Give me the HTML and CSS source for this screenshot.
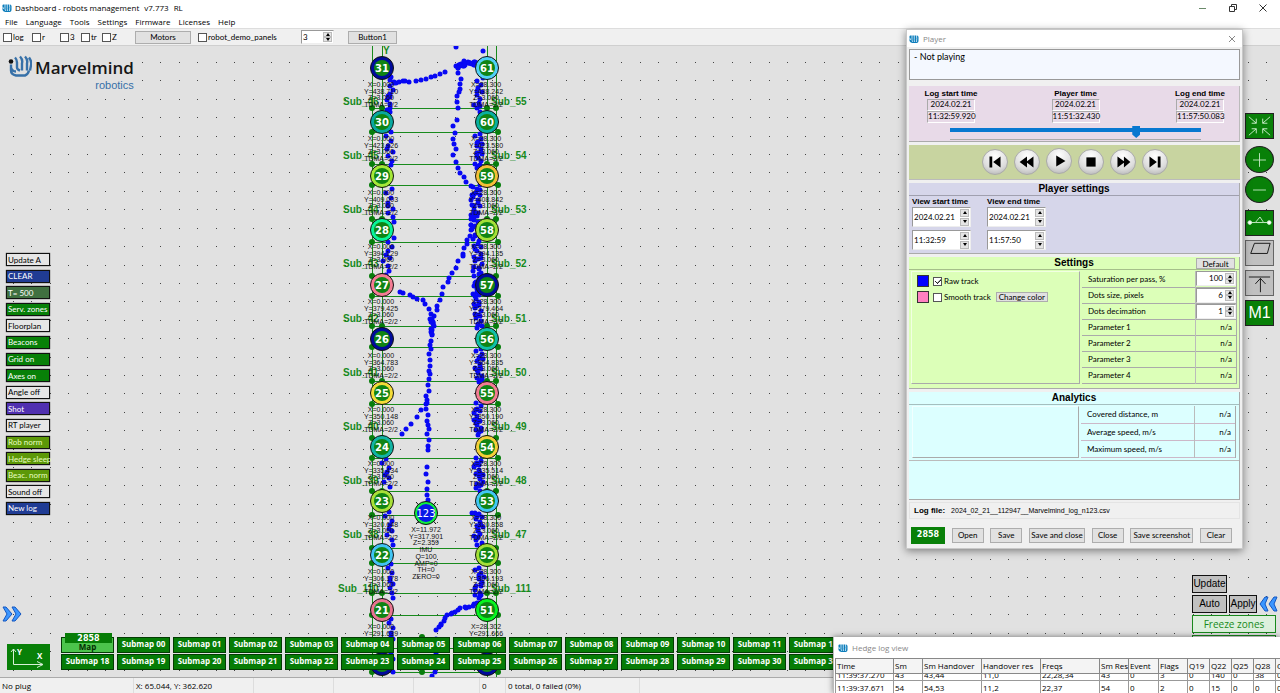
FILE: index.html
```html
<!DOCTYPE html>
<html lang="en">
<head>
<meta charset="utf-8">
<title>Dashboard - robots management</title>
<link rel="stylesheet" href="styles.css">
</head>
<body>
<svg class="defs" width="0" height="0" aria-hidden="true">
  <symbol id="brand" viewBox="0 0 20 20">
    <path d="M1 5q0-2 2-2h13q3 0 3 4v7q0 4-4 4H7q-4 0-6-4z" fill="#0b7cba"/>
    <path d="M6 2v9q0 3 2 5M10.500 2v9q0 3 1 5M15 2q1 7 0 14M1 8q2 1 2 4" fill="none" stroke="#e8f6ff" stroke-width="1.600"/>
  </symbol>
</svg>

<header class="titlebar">
  <svg class="app-icon"><use href="#brand"/></svg>
  <span class="title">Dashboard - robots management</span><span class="title">v7.773</span><span class="title">RL</span>
  <div class="window-buttons">
    <button aria-label="Minimise"><svg viewBox="0 0 10 10"><path d="M1 5.500h7" stroke="#6a8a6a"/></svg></button>
    <button aria-label="Restore"><svg viewBox="0 0 10 10"><path d="M1.500 3.500h5v5h-5zM3.500 3.500v-2h5v5h-2" fill="none" stroke="#333"/></svg></button>
    <button aria-label="Close"><svg viewBox="0 0 10 10"><path d="M1.500 1.500l7 7m0-7l-7 7" stroke="#333"/></svg></button>
  </div>
</header>
<nav class="menubar">
  <button>File</button><button>Language</button><button>Tools</button><button>Settings</button><button>Firmware</button><button>Licenses</button><button>Help</button>
</nav>
<div class="toolbar">
  <label class="check w29"><input type="checkbox">log</label>
  <label class="check w28"><input type="checkbox">r</label>
  <label class="check w21"><input type="checkbox">3</label>
  <label class="check w21"><input type="checkbox">tr</label>
  <label class="check w33"><input type="checkbox">Z</label>
  <button class="btn motors">Motors</button>
  <label class="check demo"><input type="checkbox">robot_demo_panels</label>
  <span class="spin tool-spin"><input type="text" value="3" aria-label="Robot panels"><span class="steps"><button aria-label="Up"></button><button aria-label="Down"></button></span></span>
  <button class="btn button1">Button1</button>
</div>

<main class="canvas">
  <svg class="map" id="map" role="img" aria-label="Beacon map"></svg>

  <div class="logo">
    <svg viewBox="0 0 24 22">
      <path d="M3 9v6q0 4 5 5h9q3-1 4-5M7 2q2 2 2 5v5q0 2 3 3M12 1q3 3 2 7v7M17 1q3 3 2 7v7M21 2q3 4 2 8l-1 5M3 12q1 4 5 4" fill="none" stroke="#3670a8" stroke-width="2.400"/>
      <circle cx="3" cy="6" r="2.300" fill="#111"/>
    </svg>
    <div class="logo-text"><b>Marvelmind</b><span>robotics</span></div>
  </div>

  <div class="side">
    <button>Update A</button><button class="navy">CLEAR</button><button class="dim">T= 500</button><button class="green">Serv. zones</button><button>Floorplan</button><button class="green">Beacons</button><button class="green">Grid on</button><button class="green">Axes on</button><button>Angle off</button><button class="violet">Shot</button><button>RT player</button><button class="lime">Rob norm</button><button class="lime">Hedge sleep</button><button class="lime">Beac. norm</button><button>Sound off</button><button class="navy">New log</button>
  </div>

  <button class="chevrons left" aria-label="Show left panel"><svg viewBox="0 0 20 16"><path d="M1 1h3l6 7-6 7H1l4-7zM10 1h3l6 7-6 7h-3l4-7z" fill="#3b96ff" stroke="#1456c0"/></svg></button>

  <div class="bottom">
    <svg class="axes" viewBox="0 0 43 26"><path d="M6.500 5v15.500h29M4 8l2.500-3L9 8M30 17.500l6 3-6 3" fill="none" stroke="#d8f0d8"/><text x="10" y="11">Y</text><text x="30" y="15">X</text></svg>
    <div class="submaps">
      <div class="map-cell"><button class="current">Map</button><span>2858</span></div>
      <button>Submap 00</button><button>Submap 01</button><button>Submap 02</button><button>Submap 03</button><button>Submap 04</button><button>Submap 05</button><button>Submap 06</button><button>Submap 07</button><button>Submap 08</button><button>Submap 09</button><button>Submap 10</button><button>Submap 11</button><button>Submap 12</button>
      <button>Submap 18</button><button>Submap 19</button><button>Submap 20</button><button>Submap 21</button><button>Submap 22</button><button>Submap 23</button><button>Submap 24</button><button>Submap 25</button><button>Submap 26</button><button>Submap 27</button><button>Submap 28</button><button>Submap 29</button><button>Submap 30</button><button>Submap 31</button>
    </div>
  </div>

  <div class="tools">
    <button class="first" aria-label="Fit to view"><svg viewBox="0 0 29 26"><path d="M3 3l8 7m0-5v5H6M26 3l-8 7m0-5v5h5M3 23l8-7m0 5v-5H6M26 23l-8-7m0 5v-5h5" /></svg></button>
    <button class="round" aria-label="Zoom in"><svg viewBox="0 0 29 28"><path d="M7 14h15M14.500 6v16"/></svg></button>
    <button class="round" aria-label="Zoom out"><svg viewBox="0 0 29 28"><path d="M7 14h15"/></svg></button>
    <button class="after-round" aria-label="Link"><svg viewBox="0 0 29 26"><path d="M4 12.500h6l5-6 4 6h6M10 12.500h9"/><circle cx="4" cy="12.500" r="2" fill="#fff"/><circle cx="25" cy="12.500" r="2" fill="#fff"/></svg></button>
    <button class="gray" aria-label="Plane"><svg viewBox="0 0 29 26"><path d="M9 2.500h17l-3 11H5z"/></svg></button>
    <button class="gray" aria-label="To top"><svg viewBox="0 0 29 26"><path d="M3 6.500h23M15.500 8v15M10 14l5.500-6 5.500 6"/></svg></button>
    <button class="m1">M1</button>
  </div>

  <div class="zones">
    <button>Update</button>
    <div class="row"><button>Auto</button><button class="apply">Apply</button><button class="chevrons" aria-label="Show right panel"><svg viewBox="0 0 20 16"><path d="M9 1H6L1 8l5 7h3L6 8zM18 1h-3l-5 7 5 7h3l-3-7z" fill="#3b96ff" stroke="#1456c0"/></svg></button></div>
    <button class="freeze">Freeze zones</button>
    <div class="freeze-next"></div>
  </div>
</main>

<footer class="status">
  <span class="s1">No plug</span><span class="s2">X: 65.044, Y: 362.620</span><span class="s3"></span><span class="s3"></span><span class="s4"></span><span class="s5">0</span><span class="s6">0 total, 0 failed (0%)</span>
</footer>

<section class="player">
  <div class="win-title"><svg class="app-icon"><use href="#brand"/></svg><span>Player</span><button aria-label="Close player"><svg viewBox="0 0 8 8"><path d="M1 1l6 6m0-6l-6 6" stroke="#888"/></svg></button></div>
  <textarea class="message" readonly aria-label="Player state">- Not playing</textarea>

  <div class="timeline">
    <div class="times">
      <div class="time"><b>Log start time</b><span>2024.02.21</span><span>11:32:59.920</span></div>
      <div class="time"><b>Player time</b><span>2024.02.21</span><span>11:51:32.430</span></div>
      <div class="time"><b>Log end time</b><span>2024.02.21</span><span>11:57:50.083</span></div>
    </div>
    <input type="range" min="0" max="100" value="75" aria-label="Position">
  </div>

  <div class="transport">
    <button aria-label="To start"><svg viewBox="0 0 26 26"><path d="M7 7h3v12H7zM19 7v12l-8-6z"/></svg></button>
    <button aria-label="Rewind"><svg viewBox="0 0 26 26"><path d="M13 7v12l-8-6zM20 7v12l-8-6z"/></svg></button>
    <button class="play" aria-label="Play"><svg viewBox="0 0 26 26"><path d="M10 7v12l10-6z"/></svg></button>
    <button aria-label="Stop"><svg viewBox="0 0 26 26"><path d="M8 8h10v10H8z"/></svg></button>
    <button aria-label="Forward"><svg viewBox="0 0 26 26"><path d="M7 7v12l8-6zM14 7v12l7-6z"/></svg></button>
    <button aria-label="To end"><svg viewBox="0 0 26 26"><path d="M7 7v12l8-6zM16 7h3v12h-3z"/></svg></button>
  </div>

  <div class="view">
    <h2>Player settings</h2>
    <div class="view-cols">
      <fieldset><legend>View start time</legend>
        <span class="spin"><input type="text" value="2024.02.21" aria-label="Start date"><span class="steps"><button aria-label="Up"></button><button aria-label="Down"></button></span></span>
        <span class="spin"><input type="text" value="11:32:59" aria-label="Start time"><span class="steps"><button aria-label="Up"></button><button aria-label="Down"></button></span></span>
      </fieldset>
      <fieldset><legend>View end time</legend>
        <span class="spin"><input type="text" value="2024.02.21" aria-label="End date"><span class="steps"><button aria-label="Up"></button><button aria-label="Down"></button></span></span>
        <span class="spin"><input type="text" value="11:57:50" aria-label="End time"><span class="steps"><button aria-label="Up"></button><button aria-label="Down"></button></span></span>
      </fieldset>
    </div>
  </div>

  <div class="settings">
    <h2>Settings<button class="btn default">Default</button></h2>
    <div class="split">
      <div class="tracks">
        <div class="track"><i class="raw"></i><label class="check"><input type="checkbox" checked>Raw track</label></div>
        <div class="track"><i class="smooth"></i><label class="check"><input type="checkbox">Smooth track</label><button class="btn">Change color</button></div>
      </div>
      <table class="params">
        <tr><th>Saturation per pass, %</th><td class="num"><span class="spin"><input type="text" value="100" aria-label="Saturation per pass"><span class="steps"><button aria-label="Up"></button><button aria-label="Down"></button></span></span></td></tr>
        <tr><th>Dots size, pixels</th><td class="num"><span class="spin"><input type="text" value="6" aria-label="Dots size"><span class="steps"><button aria-label="Up"></button><button aria-label="Down"></button></span></span></td></tr>
        <tr><th>Dots decimation</th><td class="num"><span class="spin"><input type="text" value="1" aria-label="Dots decimation"><span class="steps"><button aria-label="Up"></button><button aria-label="Down"></button></span></span></td></tr>
        <tr><th>Parameter 1</th><td>n/a</td></tr>
        <tr><th>Parameter 2</th><td>n/a</td></tr>
        <tr><th>Parameter 3</th><td>n/a</td></tr>
        <tr><th>Parameter 4</th><td>n/a</td></tr>
      </table>
    </div>
  </div>

  <div class="analytics">
    <h2>Analytics</h2>
    <div class="split">
      <div class="tracks"></div>
      <table class="params">
        <tr><th>Covered distance, m</th><td>n/a</td></tr>
        <tr><th>Average speed, m/s</th><td>n/a</td></tr>
        <tr><th>Maximum speed, m/s</th><td>n/a</td></tr>
      </table>
    </div>
  </div>

  <div class="logfile"><b>Log file:</b><span>2024_02_21__112947__Marvelmind_log_n123.csv</span></div>
  <div class="actions">
    <button class="btn count">2858</button><button class="btn b32">Open</button><button class="btn b32">Save</button><button class="btn b56">Save and close</button><button class="btn b32">Close</button><button class="btn b63">Save screenshot</button><button class="btn b32">Clear</button>
  </div>
</section>

<section class="hedge">
  <div class="win-title"><svg class="app-icon"><use href="#brand"/></svg><span>Hedge log view</span></div>
  <table>
    <colgroup><col class="c58"><col class="c29"><col class="c59"><col class="c59"><col class="c59"><col class="c29"><col class="c30"><col class="c29"><col class="c22"><col class="c22"><col class="c22"><col class="c22"><col class="c22"></colgroup>
    <thead><tr><th>Time</th><th>Sm</th><th>Sm Handover</th><th>Handover res</th><th>Freqs</th><th>Sm Res</th><th>Event</th><th>Flags</th><th>Q19</th><th>Q22</th><th>Q25</th><th>Q28</th><th>Q31</th></tr></thead>
    <tbody>
      <tr class="cut"><td><span>11:39:37.270</span></td><td><span>43</span></td><td><span>43,44</span></td><td><span>11,0</span></td><td><span>22,28,34</span></td><td><span>43</span></td><td><span>0</span></td><td><span>3</span></td><td><span>0</span></td><td><span>140</span></td><td><span>0</span></td><td><span>38</span></td><td><span>0</span></td></tr>
      <tr><td>11:39:37.671</td><td>54</td><td>54,53</td><td>11,2</td><td>22,37</td><td>54</td><td>0</td><td>2</td><td>0</td><td>15</td><td>0</td><td>0</td><td>0</td></tr>
    </tbody>
  </table>
</section>
<script src="map.js"></script>
</body>
</html>
```

FILE: styles.css
```css
* { box-sizing: border-box; }
body {
  --ui: "Open Sans", "Noto Sans", sans-serif;
  --small: Lato, "Liberation Sans", sans-serif;
  margin: 0;
  height: 100vh;
  display: flex;
  flex-direction: column;
  overflow: hidden;
  font: 8px/12px var(--ui);
  color: #000;
  background: #f0f0f0;
  position: relative;
}
button, input, textarea { font: inherit; color: inherit; margin: 0; padding: 0; border-radius: 0; }
button { border: 0; background: none; white-space: nowrap; }
svg { display: block; }
.defs { position: absolute; }
.app-icon { width: 10px; height: 10px; flex: none; }

.titlebar { display: flex; align-items: center; height: 16px; background: #fff; padding-left: 2px; flex: none; }
.titlebar .title { margin-left: 3px; }
.titlebar .title + .title { margin-left: 5px; }
.window-buttons { margin-left: auto; display: flex; gap: 20px; padding-right: 12px; }
.window-buttons svg { width: 10px; height: 10px; }
.menubar { display: flex; gap: 8px; height: 12px; background: #fff; padding-left: 5px; flex: none; }

.btn { background: #e1e1e1; border: 1px solid #adadad; text-align: center; font: 8px/11px var(--small); }
.check { display: flex; align-items: center; gap: 1px; font: 8px/12px var(--small); white-space: nowrap; }
.check input { appearance: none; width: 9px; height: 9px; background: #fff; border: 1px solid #555; flex: none; }
.check input:checked { background: linear-gradient(135deg, transparent 44%, #222 45%, #222 56%, transparent 57%) 3px 1px / 4px 5px no-repeat, linear-gradient(45deg, transparent 40%, #222 41%, #222 59%, transparent 60%) 1px 3px / 3px 3px no-repeat, #fff; }

.toolbar { display: flex; align-items: center; height: 18px; padding: 0 3px; border-top: 1px solid #ddd; border-bottom: 1px solid #cfcfcf; flex: none; }
.w29 { width: 29px; }
.w28 { width: 28px; }
.w21 { width: 21px; }
.w33 { width: 33px; }
.motors { width: 56px; margin-right: 7px; }
.demo { width: 103px; }
.button1 { width: 49px; margin-left: 14px; }
.toolbar .btn { height: 13px; }

.spin { display: flex; background: #fff; border: 1px solid #999; border-right-color: #eee; border-bottom-color: #eee; padding: 1px; }
.spin input { flex: 1; min-width: 0; width: 0; border: 0; background: #fff; font: 8px/11px var(--small); }
.steps { display: flex; flex-direction: column; width: 9px; flex: none; }
.steps button { flex: 1; background: #e4e4e4; border: 1px solid #bbb; display: flex; align-items: center; justify-content: center; min-height: 0; }
.steps button::before { content: ""; border: 2px solid transparent; border-top: 0; border-bottom: 3px solid #000; }
.steps button:last-child::before { border-top: 3px solid #000; border-bottom: 0; }
.tool-spin { width: 33px; height: 14px; }

.canvas { position: relative; flex: 1; min-height: 0; background: #e1e1e1; overflow: hidden; }
.map { position: absolute; inset: 0; width: 100%; height: 100%; }
.map text { text-anchor: middle; font: 7px "Liberation Sans", sans-serif; fill: #111; }
.map .sub { text-anchor: start; font: bold 10px "Liberation Sans", sans-serif; fill: #168a1c; }
.map .num { font: bold 10px "DejaVu Sans", sans-serif; fill: #fff; }
.map .hedge-num { font: 10px "DejaVu Sans", sans-serif; fill: #fff; }
.map .grid { fill: #444; }
.map .lines { stroke: #188a1c; fill: none; }
.map .knots { fill: #087d0c; }
.map .track { fill: #0808f4; }

.logo { position: absolute; left: 8px; top: 9px; display: flex; gap: 3px; background: #e1e1e1; }
.logo svg { width: 24px; height: 23px; }
.logo-text { display: flex; flex-direction: column; align-items: flex-end; font: 11px/12px "Liberation Sans", sans-serif; color: #3670a8; padding-top: 2px; }
.logo-text b { font: 600 17px/22px "Open Sans", sans-serif; color: #161616; }

.side { position: absolute; left: 6px; top: 207px; width: 44px; height: 262px; display: flex; flex-direction: column; justify-content: space-between; }
.side button { height: 13px; border: 1px solid #111; text-align: left; padding-left: 1px; font: 8px/10px var(--small); background: #e6e6e6; box-shadow: 0 0 1px #222; }
.side .navy { background: #203c94; color: #fff; }
.side .dim { background: #407040; color: #fff; }
.side .green { background: #088008; color: #fff; }
.side .violet { background: #5030b0; color: #fff; }
.side .lime { background: #5c9808; color: #e8ffc0; }

.chevrons svg { width: 20px; height: 16px; }
.chevrons.left { position: absolute; left: 2px; bottom: 55px; }

.bottom { position: absolute; left: 7px; bottom: 7px; display: flex; align-items: flex-end; gap: 11px; }
.axes { width: 43px; height: 26px; background: #088008; }
.axes text { font: bold 8px var(--ui); fill: #fff; }
.submaps { display: grid; grid-template-columns: repeat(14, 53px); gap: 1px 3px; }
.submaps button { display: block; height: 16px; width: 100%; background: #067c06; border: 1px solid #033c03; color: #fff; font: bold 8px/12px "Open Sans", sans-serif; padding-bottom: 2px; }
.map-cell { position: relative; }
.submaps .current { background: #4cc44c; color: #032c03; line-height: 10px; padding: 3px 0 0; }
.map-cell span { position: absolute; left: 4px; right: 2px; top: -4px; height: 10px; background: #067c06; color: #fff; text-align: center; font: bold 8px/11px "DejaVu Sans", sans-serif; }

.tools { position: absolute; right: 6px; top: 67px; width: 29px; display: flex; flex-direction: column; gap: 4px; }
.tools button { height: 26px; background: #088008; border: 1px solid #222; }
.tools svg { width: 27px; height: 24px; fill: none; stroke: #d0f0d0; }
.tools .first { margin-bottom: 3px; }
.tools .round { border-radius: 50%; height: 27px; margin-bottom: -1px; }
.tools .after-round { margin-top: 4px; }
.tools .gray { background: #c0c0c0; border-color: #666; }
.tools .gray svg { stroke: #111; }
.tools .m1 { color: #fff; font: 16px "Liberation Sans", sans-serif; }

.zones { position: absolute; right: 1px; top: 529px; width: 87px; display: flex; flex-direction: column; gap: 2px; align-items: flex-start; font: 10px/14px "Liberation Sans", sans-serif; }
.zones button { width: 35px; height: 18px; background: #c0c0c0; border: 1px solid #111; }
.zones .row { display: flex; gap: 2px; align-items: center; }
.zones .apply { width: 28px; }
.zones .chevrons { width: 20px; height: 16px; border: 0; background: none; }
.zones .freeze { width: 84px; background: #ddf0dd; border-color: #188a1c; color: #188a1c; font: 10px/14px "Open Sans", sans-serif; }
.freeze-next { width: 84px; height: 8px; border: 1px solid #188a1c; }

.status { display: flex; height: 16px; border-top: 1px solid #aaa; flex: none; line-height: 16px; }
.status span { border-right: 1px solid #ddd; padding-left: 2px; }
.status .s1 { width: 134px; }
.status .s2 { width: 120px; }
.status .s3 { width: 80px; }
.status .s4 { width: 66px; }
.status .s5 { width: 26px; }
.status .s6 { width: 134px; }

.player { position: absolute; right: 37px; top: 29px; width: 337px; background: #f0f0f0; border: 1px solid #c8c8c8; box-shadow: 0 2px 8px rgba(0, 0, 0, .45); padding: 0 2px 4px; display: flex; flex-direction: column; font: 8px/12px var(--small); }
.win-title { display: flex; align-items: center; gap: 4px; background: #fff; color: #888; font: 8px/12px var(--ui); height: 17px; }
.player .win-title { margin: 0 -2px 2px; padding: 0 6px 0 2px; }
.win-title button { margin-left: auto; }
.win-title button svg { width: 8px; height: 8px; }
.message { height: 31px; resize: none; display: block; border: 1px solid #999; background: #f4f8ff; padding: 1px 4px; overflow: hidden; font: 9px/12px var(--small); outline: 0; margin-bottom: 6px; }
.timeline { background: #e8dae8; border-bottom: 1px solid #aaa; border-right: 1px solid #bbb; height: 56px; padding: 2px 12px 0 15px; margin-bottom: 3px; }
.times { display: flex; justify-content: space-between; }
.time { display: flex; flex-direction: column; align-items: center; width: 54px; white-space: nowrap; }
.time b, legend { font: bold 8px/11px "Liberation Sans", sans-serif; }
.time span { width: 48px; border: 1px solid #aaa; border-right-color: #fff; border-bottom-color: #fff; text-align: center; height: 12px; line-height: 9px; }
input[type="range"] { appearance: none; display: block; width: 251px; height: 15px; margin: 2px 0 0 26px; background: linear-gradient(#0878d0, #0878d0) 0 3px / 100% 4px no-repeat; border-bottom: 1px solid #aaa; }
input[type="range"]::-webkit-slider-thumb { appearance: none; width: 8px; height: 12px; background: #0878d0; clip-path: polygon(0 0, 100% 0, 100% 70%, 50% 100%, 0 70%); }
.transport { background: #c8d4a0; height: 35px; display: flex; align-items: center; justify-content: center; gap: 6px; border-bottom: 1px solid #bbb; margin-bottom: 3px; }
.transport button { width: 26px; height: 26px; border-radius: 50%; border: 1px solid #aaa; background: radial-gradient(circle at 50% 25%, #fff, #ddd 60%, #aaa); }
.transport svg { width: 24px; height: 24px; }
.transport .play { margin-bottom: 3px; }
h2 { position: relative; margin: 0; text-align: center; font: bold 10px/12px "Liberation Sans", sans-serif; height: 13px; border-bottom: 1px solid rgba(0, 0, 0, .25); }
.view, .settings, .analytics { border-right: 1px solid #aaa; border-bottom: 1px solid #aaa; margin-bottom: 3px; }
.view { background: #d6d6ea; height: 71px; }
.view-cols { display: flex; gap: 16px; padding: 0 3px; }
fieldset { border: 0; padding: 0; margin: 0; min-width: 0; width: 59px; }
legend { padding: 0; white-space: nowrap; }
fieldset .spin { height: 20px; margin-bottom: 3px; align-items: center; }
fieldset .steps { height: 17px; gap: 1px; }
.settings { background: #dcffb8; height: 132px; }
.default { position: absolute; right: 4px; top: 1px; width: 39px; line-height: 8px; height: 11px; }
.split { display: flex; gap: 2px; padding: 1px 2px 0; }
.tracks { flex: 1; border: 1px solid rgba(255, 255, 255, .6); border-right-color: #aaa; border-bottom-color: #aaa; padding: 1px 5px; }
.track { display: flex; align-items: center; height: 16px; }
.track i { width: 12px; height: 12px; border: 1px solid #333; margin-right: 4px; }
.track .check { gap: 2px; }
.track .btn { margin-left: 5px; width: 52px; line-height: 8px; }
.raw { background: #00f; }
.smooth { background: #ff80c0; }
.params { width: 155px; border-collapse: collapse; table-layout: fixed; }
.params th { font-weight: normal; text-align: left; padding: 0 0 0 6px; }
.params td { width: 41px; text-align: right; padding: 0 4px 0 0; border-left: 1px solid #bbb; border-right: 1px solid #aaa; }
.params tr { height: 16px; border-bottom: 1px solid #aaa; }
.params .num { padding: 0; }
.num .spin { height: 15px; }
.num input { text-align: right; padding-right: 2px; }
.analytics { background: #dcffff; height: 108px; margin-bottom: 2px; }
.analytics .split { border-bottom: 1px solid #bbb; padding: 1px 3px 2px; }
.analytics .params tr { height: 17px; border-color: #ccb8c8; }
.logfile { display: flex; gap: 6px; height: 17px; align-items: center; padding-left: 4px; border: 1px solid #e4e4e4; margin-bottom: 7px; }
.logfile b { font: bold 8px/11px "Liberation Sans", sans-serif; }
.logfile span { font: 7px/11px "Liberation Sans", sans-serif; }
.actions { display: flex; align-items: center; padding: 0 8px 0 2px; justify-content: space-between; height: 18px; }
.actions .btn { height: 15px; }
.b32 { width: 32px; }
.b56 { width: 56px; }
.b63 { width: 63px; }
.actions .count { width: 34px; height: 17px; background: #088008; border-color: #088008; color: #fff; font: bold 8px/12px "DejaVu Sans", sans-serif; }

.hedge { position: absolute; left: 833px; right: 0; bottom: 0; height: 56px; background: #fff; border-left: 1px solid #bbb; box-shadow: 0 0 6px rgba(0, 0, 0, .5); overflow: hidden; padding-left: 1px; }
.hedge .win-title { height: 21px; padding-left: 3px; }
.hedge table { border-collapse: collapse; table-layout: fixed; width: 462px; }
.hedge th { background: #f4f4f4; border: 1px solid #888; height: 15px; }
.hedge th, .hedge td { text-align: left; font-weight: normal; padding: 0 0 0 1px; white-space: nowrap; line-height: 12px; overflow: hidden; }
.hedge td { border: 1px solid #999; height: 14px; }
.hedge .cut td { height: 7px; }
.cut span { display: flex; align-items: flex-end; height: 6px; overflow: hidden; line-height: 10px; }
.c58 { width: 58px; }
.c59 { width: 59px; }
.c29 { width: 29px; }
.c30 { width: 30px; }
.c22 { width: 22px; }
```

FILE: map.js
```js
const NS = "http://www.w3.org/2000/svg";
const map = document.getElementById("map");

function add(parent, tag, attrs, text) {
  const el = document.createElementNS(NS, tag);
  for (const key in attrs) el.setAttribute(key, attrs[key]);
  if (text !== undefined) el.textContent = text;
  parent.appendChild(el);
  return el;
}

// The map is stored in window coordinates; the canvas starts below the toolbar.
const root = add(map, "g", { transform: "translate(0 -46)" });

const grid = add(root, "g", { class: "grid" });
for (let row = 0; row < 34; row++) {
  for (let col = 0; col < 69; col++) {
    add(grid, "rect", { x: Math.round(13 + col * 18.43), y: Math.round(62 + row * 18.41), width: 1, height: 1 });
  }
}

const left = [
  [31, "#000a9c", "438.710"], [30, "#08a8a0", "423.926"], [29, "#a4e838", "409.003"], [28, "#08f498", "394.129"],
  [27, "#f47c94", "379.425"], [26, "#000a9c", "364.783"], [25, "#f4dc38", "350.148"], [24, "#10b4a4", "335.434"],
  [23, "#a8e038", "320.648"], [22, "#40c4f4", "306.178"], [21, "#e87490", "291.639"], [20, "#000a9c"]
];
const right = [
  [61, "#50d0f8", "438.242"], [60, "#08b0a0", "423.580"], [59, "#f4c038", "408.842"], [58, "#a4e038", "394.135"],
  [57, "#000a9c", "379.464"], [56, "#10c0a8", "364.835"], [55, "#f47c94", "350.190"], [54, "#f4d038", "335.514"],
  [53, "#40c8f4", "320.858"], [52, "#a4e038", "306.193"], [51, "#08f420", "291.666"], [50, "#000a9c"]
];
const subs = [["46", "55"], ["45", "54"], ["44", "53"], ["43", "52"], ["42", "51"], ["41", "50"], ["40", "49"], ["39", "48"], ["38", "47"], ["110", "111"]];

const lines = add(root, "g", { class: "lines" });
const knots = add(root, "g", { class: "knots" });
[372, 382, 487, 496].forEach(x => add(lines, "path", { d: `M${x}.5 46V677` }));
const levels = [108, 132, 164, 185, 219, 242, 276, 296, 326, 347, 381, 404, 438, 458, 491, 515, 548, 563, 593, 615, 648, 672];
levels.forEach((y, i) => {
  add(lines, "path", { d: `M372 ${y}.5H498` });
  (i % 2 ? [372, 498] : [372, 382, 487, 496]).forEach(x => add(knots, "circle", { cx: x, cy: y, r: 3 }));
});
add(knots, "circle", { cx: 422, cy: 637, r: 3 });
add(knots, "circle", { cx: 422, cy: 672, r: 3 });

subs.forEach(([a, b], i) => {
  const y = 105 + Math.round(i * 54.15);
  add(root, "text", { class: "sub", x: i === 9 ? 338 : 343, y }, "Sub_" + a);
  add(root, "text", { class: "sub", x: 491, y }, "Sub_" + b);
});
add(root, "text", { class: "sub", x: 383, y: 54 }, "Y");

// Recorded positions of the mobile beacon: [spacing, jitter, path]
const tracks = [
  [3, 1, "390 78L392 82L396 82L409 82"],
  [5, 0, "416 81L421 80L426 79L437 75L446 72"],
  [5, 0, "456 47L457 47"], [5, 0, "483 51L484 51"],
  [2, 1, "457 69L458 65L464 62L472 62L478 64"],
  [2, 1, "458 66L468 64L480 64"],
  [5, 1, "457 69L459 73L460 80L461 89L458 93L457 103L458 110"],
  [6, 1, "456 121L454 126L455 131L453 139L455 147L454 158L457 165L462 175L467 185L472 187L478 189"],
  [5, 1, "471 196L474 210L472 225L470 235L466 243L462 257"],
  [6, 1, "462 257L455 268L448 281L442 293L438 305L435 316L432 325"],
  [5, 1, "399 293L413 296L424 302L430 312L432 325"],
  [5, 1, "432 325L431 340L430 360L429 380L427 395L426 404L428 425L428 452"],
  [3, 1, "431 320L433 326L431 336"],
  [7, 1, "426 468L428 473L426 479L428 484L426 491L428 496L427 503"],
  [8, 1, "426 404L420 413L412 421L404 432L396 438"],
  [3, 2, "393 84L391 92L388 98L390 105L388 115"],
  [4, 3, "389 133L388 143L391 160L389 168"],
  [4, 3, "390 190L388 200L391 213L393 222"],
  [4, 3, "392 239L388 252L386 262L389 275"],
  [4, 3, "384 460L388 470L386 480L390 490"],
  [4, 3, "387 513L391 525L389 535L392 545"],
  [4, 2, "390 565L391 580L392 598"],
  [4, 2, "390 620L392 635L390 650L392 674"],
  [3, 3, "481 79L478 85L480 97L476 105L481 113"],
  [2, 3, "478 135L480 150L478 160L479 170"],
  [2, 4, "477 186L476 205L474 220L477 240L478 260L477 275"],
  [2, 3, "477 275L476 295L478 315L480 330"],
  [2, 3, "479 350L481 358L478 368L481 384"],
  [2, 3, "479 402L476 416L480 437"],
  [2, 3, "480 457L476 466L481 478L477 492"],
  [2, 3, "473 514L478 513L480 528L476 536L480 546"],
  [2, 3, "477 569L482 580L476 590L481 598L478 604"],
  [3, 1, "478 604L470 606L455 611L446 617L441 624L436 632"],
  [4, 2, "435 640L437 655L434 665L434 676"]
];
tracks.forEach(([step, jitter, points]) => {
  const path = add(root, "path", { d: "M" + points, fill: "none" });
  const group = add(root, "g", { class: "track" });
  for (let at = 0, n = 1; at <= path.getTotalLength(); at += step, n++) {
    const p = path.getPointAtLength(at);
    add(group, "circle", {
      cx: Math.round(p.x + Math.sin(n * 2.4) * jitter),
      cy: Math.round(p.y + Math.sin(n * 5.1) * Math.min(jitter, 1)),
      r: 2.5
    });
  }
});

function beacon(x, y, [id, color, pos], xText) {
  if (pos) [xText, "Y=" + pos, "Z=3.060", "TDMA=2/2"].forEach((line, i) => {
    if (y + i * 7 < 620) add(root, "text", { x: x - 1, y: y + 19 + Math.round(i * 6.6) }, line);
  });
  add(root, "circle", { cx: x, cy: y, r: 11.5, fill: color, stroke: "#111" });
  add(root, "circle", { cx: x, cy: y, r: 8, fill: "#108414" });
  if (pos) add(root, "text", { class: "num", x, y: y + 4 }, id);
}
left.forEach((item, i) => beacon(382, 68 + Math.round(i * 54.15), item, "X=0.000"));
right.forEach((item, i) => beacon(487, 68 + Math.round(i * 54.15), item, i === 10 ? "X=28.302" : "X=28.300"));

add(root, "path", { d: "M416 502l20 22M436 502l-20 22", stroke: "#111" });
add(root, "circle", { cx: 426, cy: 513, r: 11.5, fill: "#10f040", stroke: "#111" });
add(root, "circle", { cx: 426, cy: 513, r: 9, fill: "#0818e8" });
add(root, "text", { class: "hedge-num", x: 426, y: 517 }, "123");
["X=11.972", "Y=317.901", "Z=2.359", "IMU", "Q=100", "AMP=0", "TH=0", "ZERO=0"].forEach((line, i) =>
  add(root, "text", { x: 426, y: 532 + Math.round(i * 6.7) }, line));
```
